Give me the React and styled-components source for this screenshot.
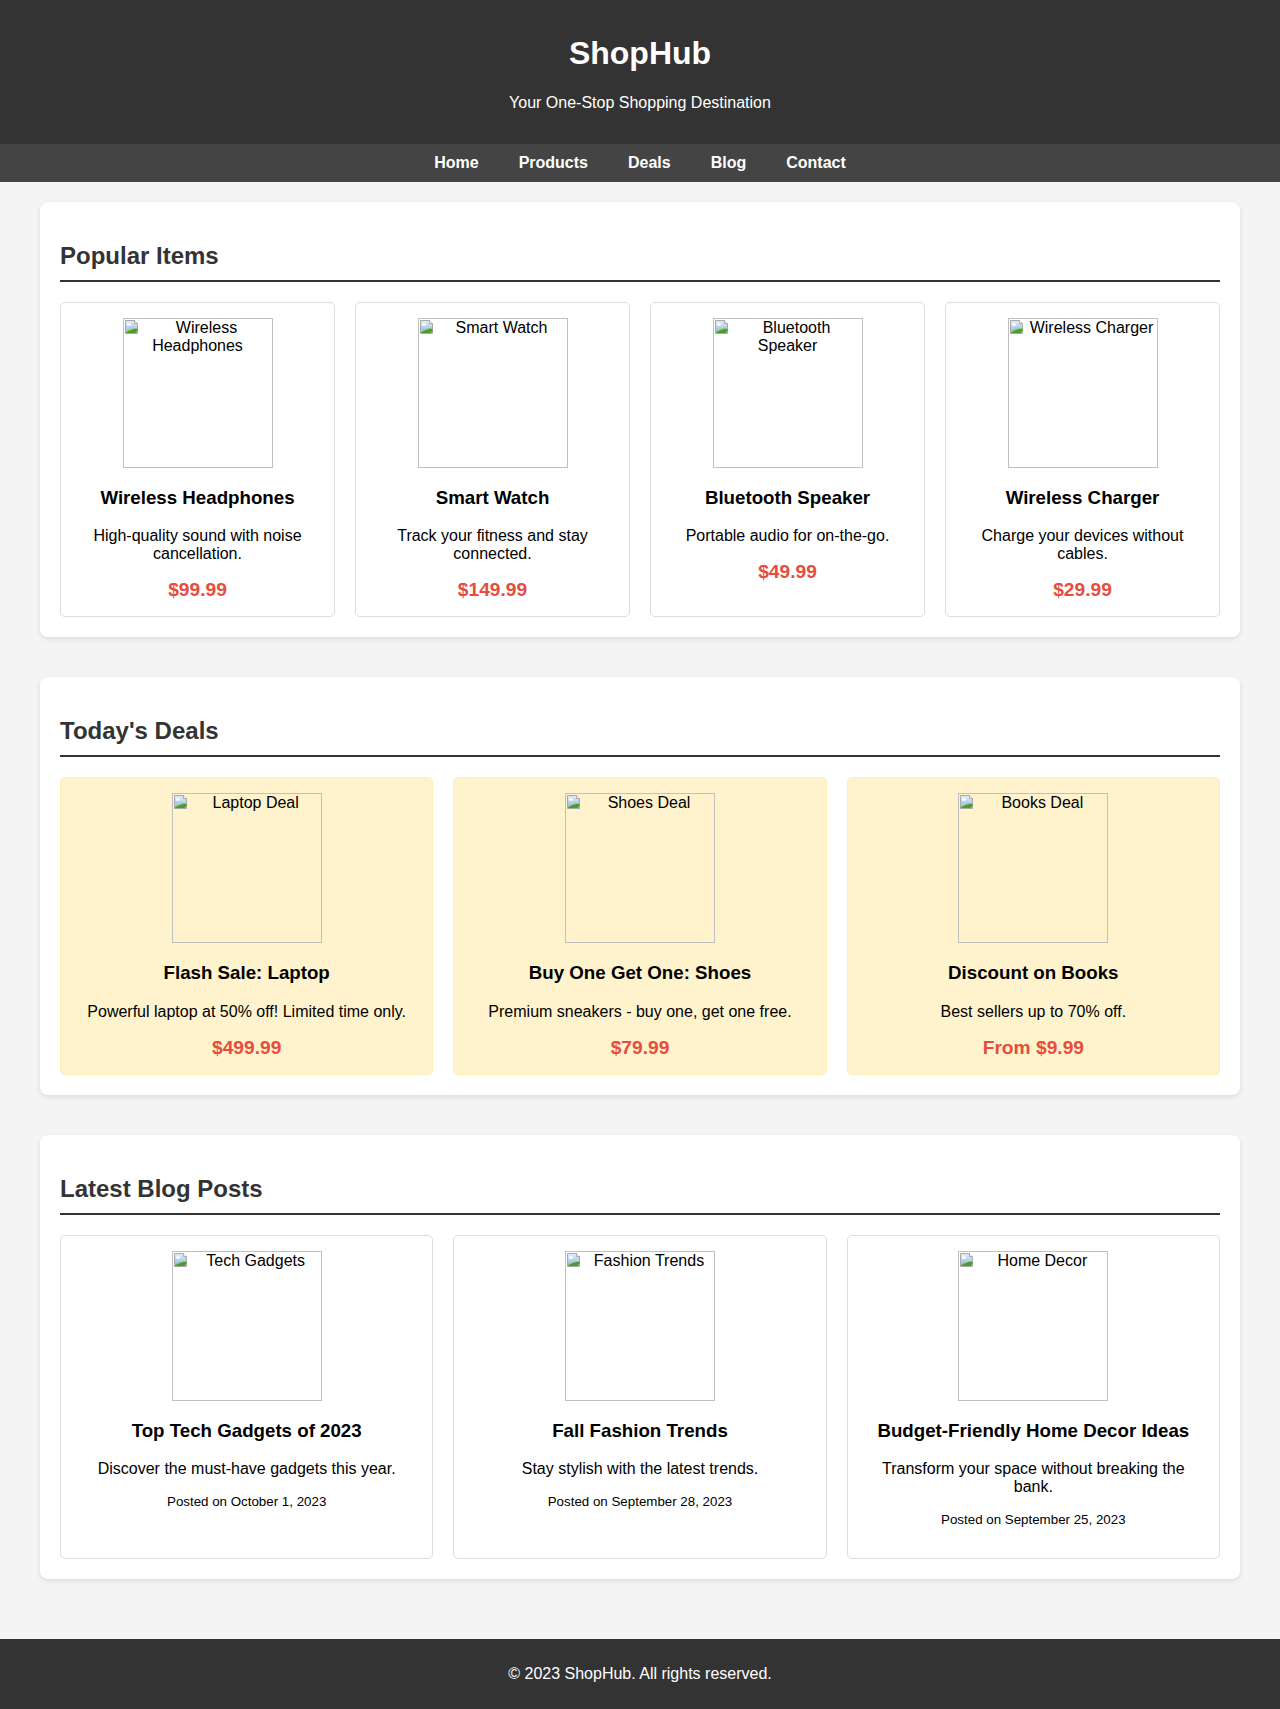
import styled, { createGlobalStyle } from 'styled-components'

const GlobalStyle = createGlobalStyle`
  body {
    margin: 0;
    font-family: "Liberation Sans", Arial, Helvetica, sans-serif;
    background: #f4f4f4;
    color: #000;
  }
`

const Header = styled.header`
  background: #333;
  color: #fff;
  text-align: center;
  padding: 35px 0 32px;
`

const Logo = styled.h1`
  font-size: 32px;
  font-weight: 700;
  margin: 0 0 22px;
`

const Tagline = styled.p`
  font-size: 16px;
  margin: 0;
`

const Nav = styled.nav`
  background: #444;
  padding: 10px 0;
  text-align: center;
`

const NavLink = styled.a`
  color: #fff;
  font-weight: 700;
  font-size: 16px;
  text-decoration: none;
  margin: 0 20px;
`

const Main = styled.main`
  max-width: 1200px;
  margin: 0 auto;
  padding: 20px;
`

const Section = styled.section`
  background: #fff;
  border-radius: 8px;
  padding: 20px;
  margin-bottom: 40px;
  box-shadow: 0 2px 5px rgba(0, 0, 0, 0.1);
`

const SectionTitle = styled.h2`
  font-size: 24px;
  color: #333;
  margin: 20px 0;
  padding-bottom: 10px;
  border-bottom: 2px solid #333;
`

const Grid = styled.div`
  display: grid;
  grid-template-columns: repeat(${({ $cols }) => $cols}, 1fr);
  gap: 20px;
`

const Card = styled.div`
  background: ${({ $deal }) => ($deal ? '#fff3cd' : '#fff')};
  border: 1px solid ${({ $deal }) => ($deal ? '#ffeeba' : '#ddd')};
  border-radius: 5px;
  padding: 15px;
  text-align: center;
`

const ImageBox = styled.div`
  width: 150px;
  height: 150px;
  box-sizing: border-box;
  border: 1px solid #c0c0c0;
  margin: 0 auto;
  font-size: 16px;
  text-align: center;
  overflow: hidden;
`

const BrokenIcon = styled.svg`
  float: left;
  width: 16px;
  height: 16px;
  margin-right: 2px;
`

const CardTitle = styled.h3`
  font-size: 18.72px;
  font-weight: 700;
  margin: 18.72px 0;
`

const CardText = styled.p`
  font-size: 16px;
  margin: 16px 0;
`

const Price = styled.div`
  font-size: 19.2px;
  font-weight: 700;
  color: #e74c3c;
`

const PostDate = styled.p`
  font-size: 13.33px;
  margin: 16px 0;
`

const Footer = styled.footer`
  background: #333;
  color: #fff;
  text-align: center;
  padding: 10px;

  p {
    margin: 16px 0;
    font-size: 16px;
  }
`

const popular = [
  { alt: 'Wireless Headphones', title: 'Wireless Headphones', text: 'High-quality sound with noise cancellation.', price: '$99.99' },
  { alt: 'Smart Watch', title: 'Smart Watch', text: 'Track your fitness and stay connected.', price: '$149.99' },
  { alt: 'Bluetooth Speaker', title: 'Bluetooth Speaker', text: 'Portable audio for on-the-go.', price: '$49.99' },
  { alt: 'Wireless Charger', title: 'Wireless Charger', text: 'Charge your devices without cables.', price: '$29.99' },
]

const deals = [
  { alt: 'Laptop Deal', title: 'Flash Sale: Laptop', text: 'Powerful laptop at 50% off! Limited time only.', price: '$499.99' },
  { alt: 'Shoes Deal', title: 'Buy One Get One: Shoes', text: 'Premium sneakers - buy one, get one free.', price: '$79.99' },
  { alt: 'Books Deal', title: 'Discount on Books', text: 'Best sellers up to 70% off.', price: 'From $9.99' },
]

const posts = [
  { alt: 'Tech Gadgets', title: 'Top Tech Gadgets of 2023', text: 'Discover the must-have gadgets this year.', date: 'Posted on October 1, 2023' },
  { alt: 'Fashion Trends', title: 'Fall Fashion Trends', text: 'Stay stylish with the latest trends.', date: 'Posted on September 28, 2023' },
  { alt: 'Home Decor', title: 'Budget-Friendly Home Decor Ideas', text: 'Transform your space without breaking the bank.', date: 'Posted on September 25, 2023' },
]

// stand-in for the browser's broken image rendering (icon + alt text)
function BrokenImage({ alt }) {
  return (
    <ImageBox role="img" aria-label={alt}>
      <BrokenIcon viewBox="0 0 16 16">
        <defs>
          <linearGradient id="sky" x1="0" y1="0" x2="0" y2="1">
            <stop offset="0" stopColor="#e4eef9" />
            <stop offset="1" stopColor="#8fb3e3" />
          </linearGradient>
        </defs>
        <path d="M1.5 1.5h9l3 3v10h-12z" fill="url(#sky)" stroke="#a9a9a9" />
        <path d="M10.5 1.5v3h3" fill="#fff" stroke="#a9a9a9" />
        <ellipse cx="5" cy="5.5" rx="2.2" ry="1.2" fill="#fff" />
        <path d="M2 14h9.5l2-2.5V9.5C10 9 6 10.5 2 13z" fill="#4f9a2f" />
        <path d="M2 13c4-2.5 8-4 11.5-3.5" fill="none" stroke="#8fd16a" />
      </BrokenIcon>
      {alt}
    </ImageBox>
  )
}

export default function App() {
  return (
    <>
      <GlobalStyle />
      <Header>
        <Logo>ShopHub</Logo>
        <Tagline>Your One-Stop Shopping Destination</Tagline>
      </Header>
      <Nav>
        <NavLink href="#">Home</NavLink>
        <NavLink href="#">Products</NavLink>
        <NavLink href="#">Deals</NavLink>
        <NavLink href="#">Blog</NavLink>
        <NavLink href="#">Contact</NavLink>
      </Nav>

      <Main>
        <Section>
          <SectionTitle>Popular Items</SectionTitle>
          <Grid $cols={4}>
            {popular.map((item) => (
              <Card key={item.title}>
                <BrokenImage alt={item.alt} />
                <CardTitle>{item.title}</CardTitle>
                <CardText>{item.text}</CardText>
                <Price>{item.price}</Price>
              </Card>
            ))}
          </Grid>
        </Section>

        <Section>
          <SectionTitle>Today's Deals</SectionTitle>
          <Grid $cols={3}>
            {deals.map((deal) => (
              <Card key={deal.title} $deal>
                <BrokenImage alt={deal.alt} />
                <CardTitle>{deal.title}</CardTitle>
                <CardText>{deal.text}</CardText>
                <Price>{deal.price}</Price>
              </Card>
            ))}
          </Grid>
        </Section>

        <Section>
          <SectionTitle>Latest Blog Posts</SectionTitle>
          <Grid $cols={3}>
            {posts.map((post) => (
              <Card key={post.title}>
                <BrokenImage alt={post.alt} />
                <CardTitle>{post.title}</CardTitle>
                <CardText>{post.text}</CardText>
                <PostDate>{post.date}</PostDate>
              </Card>
            ))}
          </Grid>
        </Section>
      </Main>

      <Footer>
        <p>© 2023 ShopHub. All rights reserved.</p>
      </Footer>
    </>
  )
}
